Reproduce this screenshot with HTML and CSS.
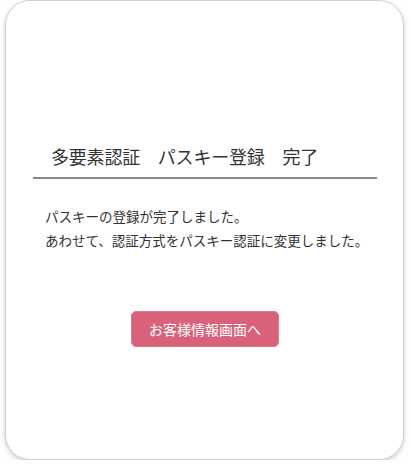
FILE: index.html
```html
<!DOCTYPE html>
<html lang="ja">
<head>
    <meta charset="UTF-8">
    <meta name="viewport" content="width=device-width, initial-scale=1.0">
    <title>パスキー登録完了</title>
    <link rel="stylesheet" href="styles.css">
</head>
<body>
    <div class="card">
        <h1 class="title">多要素認証　パスキー登録　完了</h1>
        <p class="message">パスキーの登録が完了しました。<br>あわせて、認証方式をパスキー認証に変更しました。</p>
        <div class="actions">
            <button class="btn">お客様情報画面へ</button>
        </div>
    </div>
</body>
</html>
```

FILE: styles.css
```css
body {
    font-family: "Noto Sans CJK JP", "Noto Sans", sans-serif;
    margin: 0;
    padding: 0 6px 0 5px;
    background-color: #fff;
    color: #333;
}
.card {
    height: 460px;
    box-sizing: border-box;
    border: 1px solid #d0d0d0;
    border-radius: 25px;
    box-shadow: 0 2px 5px rgba(0,0,0,0.2);
    padding: 140px 26px 0 27px;
    background-color: #fff;
}
.title {
    margin: 0;
    padding: 0 0 6px 18px;
    font-size: 18px;
    font-weight: normal;
    line-height: 30px;
    letter-spacing: -0.2px;
    border-bottom: 2px solid #888;
}
.message {
    margin: 25px 0 0 12px;
    font-size: 13.5px;
    line-height: 24px;
    white-space: nowrap;
}
.actions {
    margin-top: 59px;
    display: flex;
    justify-content: center;
}
.btn {
    font-family: inherit;
    width: 148px;
    height: 36px;
    background-color: #d9627a;
    color: #fff;
    border: 1px solid #e07a90;
    border-radius: 5px;
    font-size: 14px;
    cursor: pointer;
}
```
